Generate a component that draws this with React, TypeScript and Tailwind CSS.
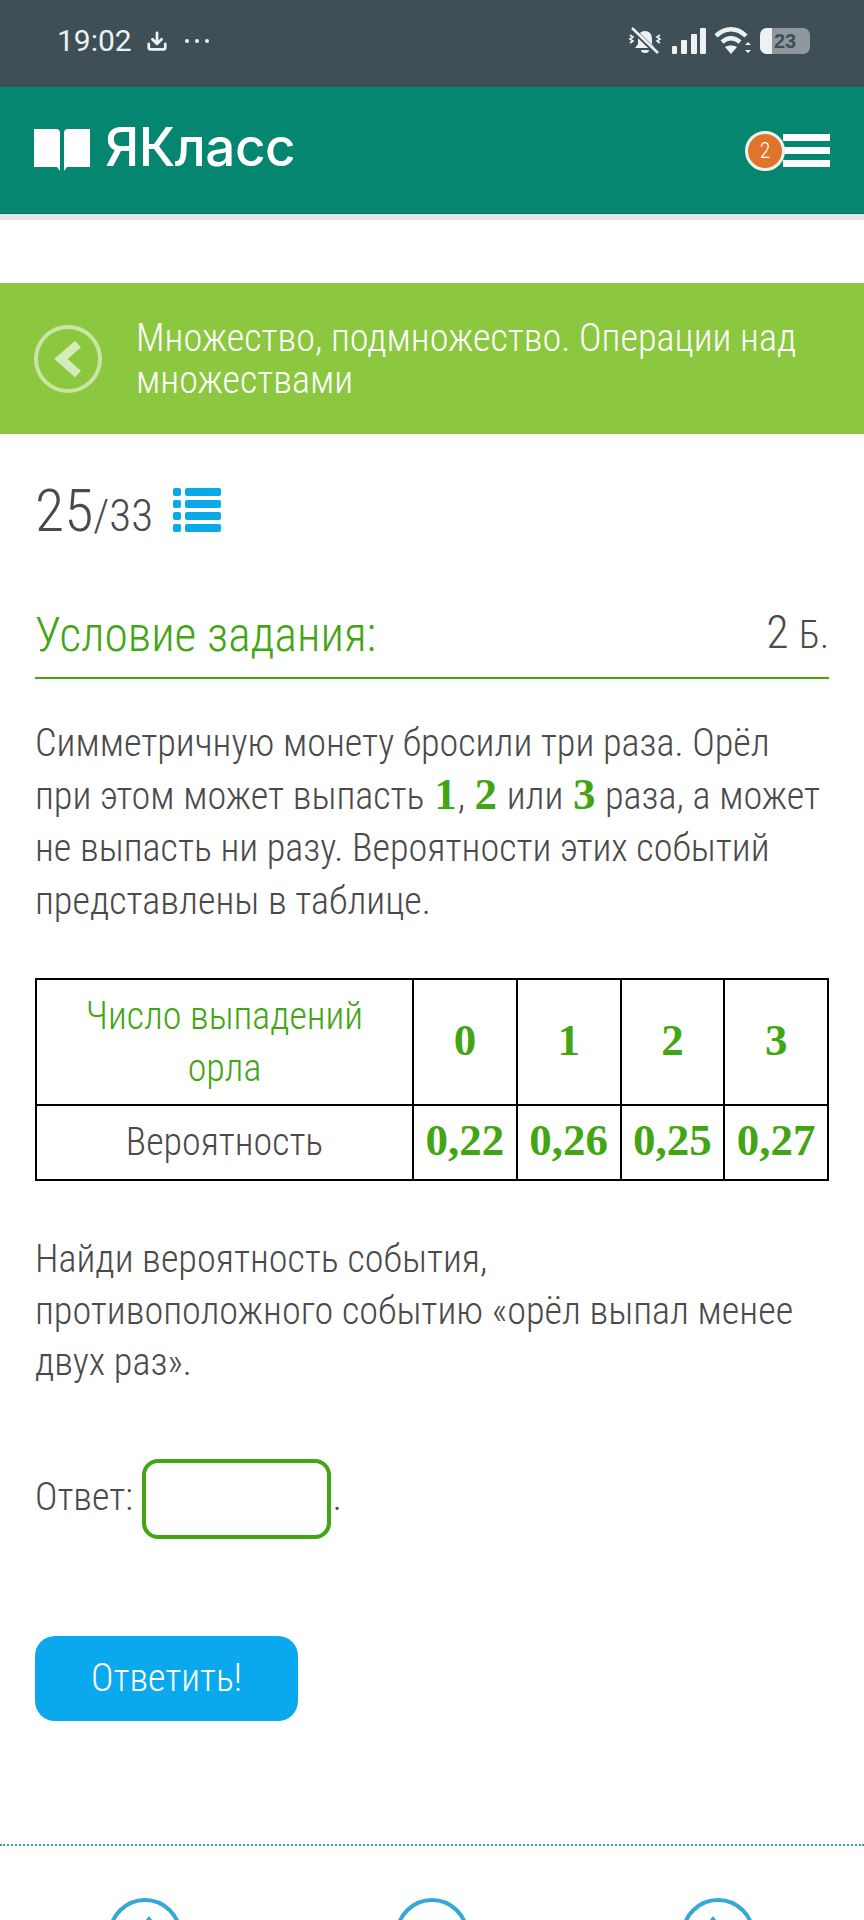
import { Download } from "lucide-react";

const bodyFont = "font-['Roboto','Noto_Sans',sans-serif]";
const mathFont = "font-['Liberation_Serif','DejaVu_Serif',serif]";

function Num({ children }: { children: string }) {
  return <span className={`${mathFont} px-[1px] text-[45px] font-bold leading-none text-[#42a513] [font-stretch:100%]`}>{children}</span>;
}

function StatusBar() {
  return (
    <div className="flex h-[87px] items-start justify-between bg-[#3e4f57] pl-[57px] pr-[54px] pt-[26px] font-normal text-[#eef1f2] [font-stretch:100%]">
      <div className="flex items-center gap-[14px]">
        <span className="text-[30px] leading-[30px]">19:02</span>
        <Download size={22} strokeWidth={3} />
        <span className="ml-[3px] flex gap-[6px]">
          <i className="size-[4px] rounded-full bg-[#eef1f2]" />
          <i className="size-[4px] rounded-full bg-[#eef1f2]" />
          <i className="size-[4px] rounded-full bg-[#eef1f2]" />
        </span>
      </div>
      <div className="flex items-center gap-[9px]">
        <svg width="36" height="30" viewBox="0 0 36 30" fill="#eef1f2">
          <path d="M18 5c-5 0-7 4-7 8v5l-3 4h20l-3-4v-5c0-4-2-8-7-8zM14 24a4 3 0 0 0 8 0z" />
          <path d="M5 3l26 25" stroke="#3e4f57" strokeWidth="5" />
          <path d="M5 2l26 25" stroke="#eef1f2" strokeWidth="2.5" />
          <path d="M3 9l3 2-3 2 3 2-3 2M33 9l-3 2 3 2-3 2 3 2" fill="none" stroke="#eef1f2" strokeWidth="1.6" />
        </svg>
        <svg width="34" height="26" viewBox="0 0 34 26" fill="#eef1f2">
          <rect x="0" y="18" width="5" height="8" rx="1" />
          <rect x="9" y="12" width="6" height="14" rx="1" />
          <rect x="19" y="6" width="6" height="20" rx="1" />
          <rect x="28" y="0" width="6" height="26" rx="1" />
        </svg>
        <svg width="36" height="28" viewBox="0 0 36 28" fill="none" stroke="#eef1f2" strokeWidth="4.5">
          <path d="M1 9c9-9 21-9 30 0" />
          <path d="M7 15c6-5 12-5 18 0" />
          <path d="M10 20l6 7 6-7c-3-2-9-2-12 0z" fill="#eef1f2" stroke="none" />
          <path d="M30 18l3-3 3 3zM30 23l3 3 3-3z" fill="#eef1f2" stroke="none" />
        </svg>
        <div className="relative flex h-[26px] w-[50px] overflow-hidden rounded-[7px] bg-[#8f989d]">
          <div className="h-full w-[12px] bg-[#eef1f2]" />
          <span className="ml-[2px] font-['Liberation_Sans',sans-serif] text-[20px] font-bold leading-[26px] text-[#3e4f57]">23</span>
        </div>
      </div>
    </div>
  );
}

function Header() {
  return (
    <div className="border-b-[1px] border-[#04705e]">
      <div className="flex h-[126px] items-center justify-between bg-[#058670] pl-[34px] pr-[34px]">
        <div className="flex items-center gap-[15px]">
          <svg width="56" height="44" viewBox="0 0 56 44" fill="#fff">
            <path d="M0 1h22c3 0 4 2 4 4v38l-3-4H0z" />
            <path d="M56 1H34c-3 0-4 2-4 4v38l3-4h23z" />
          </svg>
          <span className="mb-[5px] font-['Inter','Lato',sans-serif] text-[53px] font-medium leading-none tracking-[-0.5px] text-white [font-stretch:100%]">ЯКласс</span>
        </div>
        <div className="relative">
          <div className="flex w-[47px] flex-col gap-[6px]">
            <div className="h-[7px] bg-white" />
            <div className="h-[7px] bg-white" />
            <div className="h-[7px] bg-white" />
          </div>
          <div className="absolute left-[-38px] top-[-3px] flex size-[40px] items-center justify-center rounded-full border-[3px] border-[#e9f4ef] bg-[#e0742a] text-[22px] font-light text-white">
            2
          </div>
        </div>
      </div>
    </div>
  );
}

function ArrowCircle({ apex }: { apex?: number }) {
  return (
    <svg width="74" height="74" viewBox="0 0 74 74" fill="none">
      <circle cx="37" cy="37" r="35" stroke="#35a8d4" strokeWidth="4" />
      {apex !== undefined && <path d={`M${apex} 18l-14 18h28z`} fill="#35a8d4" />}
    </svg>
  );
}

export default function App() {
  return (
    <div className={`${bodyFont} h-[1920px] w-[864px] overflow-hidden bg-white font-light text-[#4a4a4a] [font-stretch:86%]`}>
      <StatusBar />
      <Header />
      <div className="h-[6px] bg-[#e4e5e6]" />

      <div className="mt-[63px] flex h-[151px] items-center gap-[34px] bg-[#8bc83f] pl-[34px] pr-[40px]">
        <div className="flex size-[68px] shrink-0 items-center justify-center rounded-full border-[4px] border-[#c9e5a6]">
          <svg width="30" height="38" viewBox="0 0 30 38" fill="none" stroke="#d5ebba" strokeWidth="9">
            <path d="M25 4L8 19l17 15" />
          </svg>
        </div>
        <div className="text-[38.2px] leading-[42px] text-white">Множество, подмножество. Операции над множествами</div>
      </div>

      <div className="px-[35px]">
        <div className="mt-[47px] flex items-center gap-[20px]">
          <div className="leading-none">
            <span className="text-[60px]">25</span>
            <span className="text-[45px]">/33</span>
          </div>
          <svg width="48" height="46" viewBox="0 0 48 46" fill="#0aa9e8">
            <rect x="0" y="0" width="8" height="8" rx="2" />
            <rect x="12" y="0" width="36" height="8" rx="2" />
            <rect x="0" y="12" width="8" height="8" rx="2" />
            <rect x="12" y="12" width="36" height="8" rx="2" />
            <rect x="0" y="24" width="8" height="8" rx="2" />
            <rect x="12" y="24" width="36" height="8" rx="2" />
            <rect x="0" y="36" width="8" height="8" rx="2" />
            <rect x="12" y="36" width="36" height="8" rx="2" />
          </svg>
        </div>

        <div className="mt-[65px] flex items-end justify-between border-b-[2px] border-[#42a513] pb-[16px]">
          <h2 className="text-[47.5px] font-light leading-[52px] text-[#42a513]">Условие задания:</h2>
          <div className="text-[46px] leading-[52px]">
            2 <span className="text-[38px]">Б.</span>
          </div>
        </div>

        <p className="mt-[38px] text-[38.2px] leading-[52.6px]">
          Симметричную монету бросили три раза. Орёл при этом может выпасть <Num>1</Num>, <Num>2</Num> или <Num>3</Num> раза, а может не выпасть ни разу. Вероятности этих событий представлены в таблице.
        </p>

        <table className="mt-[51px] w-full table-fixed border-collapse text-center text-[38px]">
          <tbody>
            <tr className="h-[126px]">
              <td className="w-[377px] border-[2px] border-black px-[40px] leading-[52px] text-[#42a513]">Число выпадений орла</td>
              {["0", "1", "2", "3"].map((n) => (
                <td key={n} className="border-[2px] border-black">
                  <Num>{n}</Num>
                </td>
              ))}
            </tr>
            <tr className="h-[75px]">
              <td className="border-[2px] border-black">Вероятность</td>
              {["0,22", "0,26", "0,25", "0,27"].map((n) => (
                <td key={n} className="border-[2px] border-black">
                  <Num>{n}</Num>
                </td>
              ))}
            </tr>
          </tbody>
        </table>

        <p className="mt-[53px] text-[38.2px] leading-[51.5px]">
          Найди вероятность события,
          <br />
          противоположного событию «орёл выпал менее двух раз».
        </p>

        <div className="mt-[70px] flex items-end gap-[9px] text-[38px]">
          <span className="pb-[16px] leading-[52px]">Ответ:</span>
          <div className="h-[80px] w-[189px] rounded-[16px] border-[4px] border-[#42a513]" />
          <span className="ml-[-7px] pb-[16px] leading-[52px]">.</span>
        </div>

        <button className="mt-[97px] flex h-[85px] w-[263px] items-center justify-center rounded-[20px] bg-[#0aa9ee] text-[38px] font-light text-white">
          Ответить!
        </button>
      </div>

      <div className="mt-[123px] border-b-[2px] border-dotted border-[#3c97bb]" />

      <div className="mt-[52px] flex justify-between pl-[108px] pr-[109px]">
        <ArrowCircle apex={41} />
        <ArrowCircle />
        <ArrowCircle apex={32} />
      </div>
    </div>
  );
}
